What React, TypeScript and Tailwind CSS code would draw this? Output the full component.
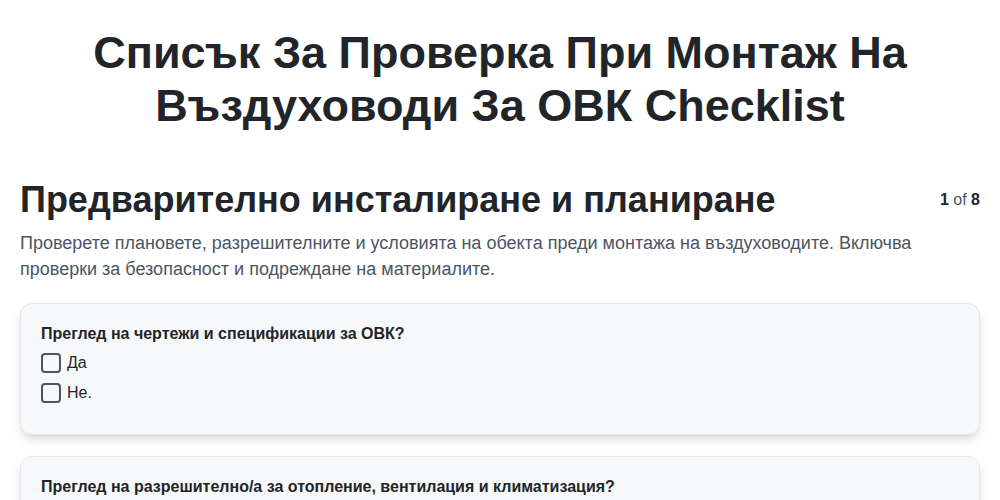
import { useState } from 'react';

const sections = [
  {
    title: 'Предварително инсталиране и планиране',
    description:
      'Проверете плановете, разрешителните и условията на обекта преди монтажа на въздуховодите. Включва проверки за безопасност и подреждане на материалите.',
    questions: [
      { id: 'q1', label: 'Преглед на чертежи и спецификации за ОВК?', options: ['Да', 'Не.'] },
      {
        id: 'q2',
        label: 'Преглед на разрешително/а за отопление, вентилация и климатизация?',
        options: ['Да', 'Не.'],
      },
    ],
  },
];

export default function App() {
  const [answers, setAnswers] = useState<Record<string, string[]>>({});
  const section = sections[0];

  const toggle = (qid: string, opt: string) => {
    setAnswers((prev) => {
      const cur = prev[qid] ?? [];
      return {
        ...prev,
        [qid]: cur.includes(opt) ? cur.filter((o) => o !== opt) : [...cur, opt],
      };
    });
  };

  return (
    <div className="min-h-screen bg-white text-[#212529] font-['Liberation_Sans',Arial,sans-serif]">
      <div className="px-5">
        {/* Header */}
        <h1 className="pt-[26px] text-center text-[45px] font-bold leading-[53px] px-16">
          Списък За Проверка При Монтаж На Въздуховоди За ОВК Checklist
        </h1>

        {/* Section heading */}
        <div className="mt-[46px] flex items-center justify-between">
          <h2 className="text-[36px] font-bold leading-[44px]">{section.title}</h2>
          <div className="text-base">
            <span className="font-bold">1</span> <span className="text-[#4b5563]">of</span>{' '}
            <span className="font-bold">8</span>
          </div>
        </div>
        <p className="mt-[8px] text-[18px] leading-[26px] text-[#4b5563]">{section.description}</p>

        {/* Questions */}
        <div className="mt-[21px] flex flex-col gap-[21px] pb-10">
          {section.questions.map((q) => (
            <div
              key={q.id}
              className="rounded-xl border border-[#e5e7eb] bg-[#f7f8fa] px-5 pt-[18px] pb-[29px] shadow-[0_6px_12px_-2px_rgba(0,0,0,0.15),0_2px_4px_-2px_rgba(0,0,0,0.08)]"
            >
              <div className="text-base font-bold leading-6">{q.label}</div>
              <div className="mt-[5px] flex flex-col gap-[6px]">
                {q.options.map((opt) => {
                  const checked = (answers[q.id] ?? []).includes(opt);
                  return (
                    <label key={opt} className="flex items-center gap-[6px] text-base leading-6 cursor-pointer">
                      <span
                        onClick={() => toggle(q.id, opt)}
                        className={`h-5 w-5 rounded-[4px] border-2 border-[#4b5563] ${checked ? 'bg-[#4b5563]' : 'bg-transparent'}`}
                      />
                      <span>{opt}</span>
                    </label>
                  );
                })}
              </div>
            </div>
          ))}
        </div>
      </div>
    </div>
  );
}
